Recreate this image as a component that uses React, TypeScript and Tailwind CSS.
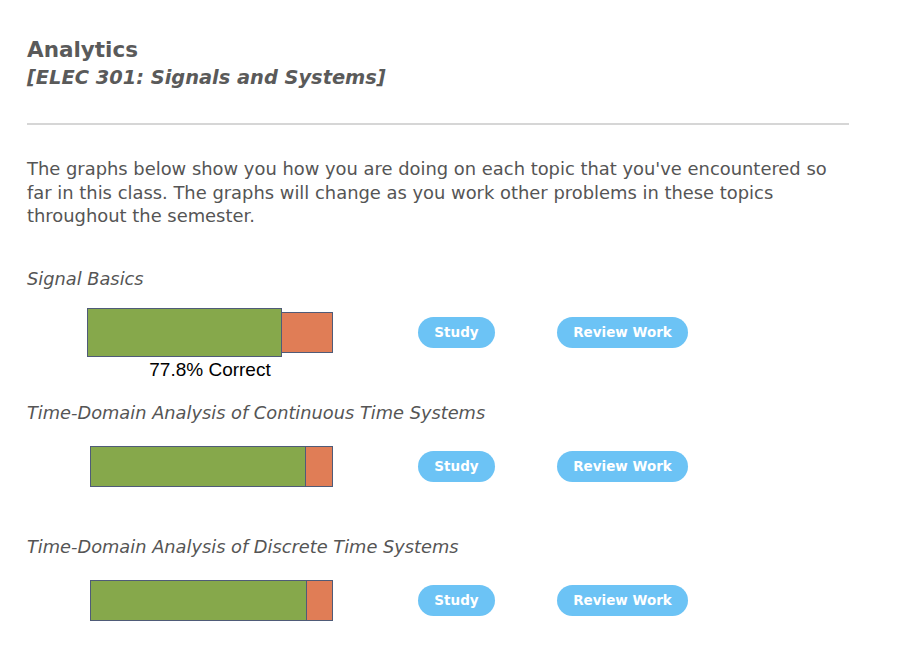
import React from "react";

// One topic row: label, stacked bar, and the two action buttons
type Topic = {
  name: string;
  offset: number; // left offset of the bar inside its column
  correct: number; // green width in px
  wrong: number; // orange width in px
  tallCorrect?: boolean;
  caption?: string;
};

const topics: Topic[] = [
  { name: "Signal Basics", offset: 60, correct: 195, wrong: 51, tallCorrect: true, caption: "77.8% Correct" },
  { name: "Time-Domain Analysis of Continuous Time Systems", offset: 63, correct: 216, wrong: 27 },
  { name: "Time-Domain Analysis of Discrete Time Systems", offset: 63, correct: 217, wrong: 26 },
];

function TopicBar({ topic }: { topic: Topic }) {
  return (
    <div className="relative flex h-[49px] w-fit items-center" style={{ marginLeft: topic.offset }}>
      <div
        className={`border border-[#4f5b78] bg-[#86a84b] ${topic.tallCorrect ? "h-[49px]" : "h-[41px]"}`}
        style={{ width: topic.correct }}
      />
      <div className="h-[41px] border border-l-0 border-[#4f5b78] bg-[#e07d56]" style={{ width: topic.wrong }} />
      {topic.caption && (
        <div className="absolute left-0 right-0 top-[52px] text-center font-['Liberation_Sans',Arial,sans-serif] text-[19px] leading-5 text-black">
          {topic.caption}
        </div>
      )}
    </div>
  );
}

export default function App() {
  return (
    <div className="min-h-[672px] bg-white font-['DejaVu_Sans',Verdana,sans-serif] text-[#555555]">
      <div className="w-[849px] pl-[27px] pt-[36px]">
        <h1 className="text-[21.5px] font-bold leading-7 text-[#5a5a5a]">Analytics</h1>
        <h2 className="text-[19.4px] font-bold italic leading-7 text-[#5a5a5a]">
          [ELEC 301: Signals and Systems]
        </h2>

        <hr className="mt-[31px] border-t-2 border-[#d6d6d6]" />

        <p className="mt-[32px] text-[17.9px] leading-[23.5px] text-[#555555]">
          The graphs below show you how you are doing on each topic that you've encountered so far in this class. The
          graphs will change as you work other problems in these topics throughout the semester.
        </p>

        <div className="mt-[39px]">
          {topics.map((topic) => (
            <section key={topic.name} className="h-[134px]">
              <div className="h-6 text-[17.8px] italic leading-6 text-[#555555]">{topic.name}</div>
              <div className="mt-[17px] flex h-[49px] items-center">
                <div className="w-[391px]">
                  <TopicBar topic={topic} />
                </div>
                <button className="h-[31px] w-[77px] rounded-full bg-[#6cc3f5] text-[13.5px] font-bold text-white">
                  Study
                </button>
                <button className="ml-[62px] h-[31px] w-[131px] rounded-full bg-[#6cc3f5] text-[13.5px] font-bold text-white">
                  Review Work
                </button>
              </div>
            </section>
          ))}
        </div>
      </div>
    </div>
  );
}
